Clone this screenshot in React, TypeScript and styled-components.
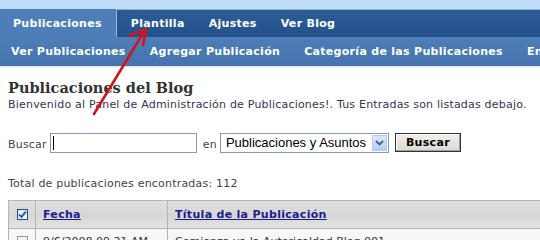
import styled, { createGlobalStyle } from "styled-components";

const GlobalStyle = createGlobalStyle`
  body {
    margin: 0;
    background: #fff;
    font-family: "DejaVu Sans", Verdana, sans-serif;
  }
`;

const mainTabs = ["Publicaciones", "Plantilla", "Ajustes", "Ver Blog"];
const subTabs = ["Ver Publicaciones", "Agregar Publicación", "Categoría de las Publicaciones", "Entradas"];

export default function App() {
  return (
    <Page>
      <GlobalStyle />
      <TopStrip />
      <MainNav>
        {mainTabs.map((t, i) => (
          <MainTab key={t} $active={i === 0}>{t}</MainTab>
        ))}
      </MainNav>
      <SubNav>
        {subTabs.map((t) => (
          <SubTab key={t}>{t}</SubTab>
        ))}
      </SubNav>

      <Content>
        <Title>Publicaciones del Blog</Title>
        <Intro>Bienvenido al Panel de Administración de Publicaciones!. Tus Entradas son listadas debajo.</Intro>

        <SearchRow>
          <Label>Buscar</Label>
          <SearchInput>
            <Caret />
          </SearchInput>
          <Label>en</Label>
          <Select>
            <SelectText>Publicaciones y Asuntos</SelectText>
            <SelectArrow>
              <svg width="9" height="6" viewBox="0 0 9 6">
                <path d="M1 1 L4.5 4.5 L8 1" fill="none" stroke="#4d6185" strokeWidth="1.8" />
              </svg>
            </SelectArrow>
          </Select>
          <Button>Buscar</Button>
        </SearchRow>

        <Total>Total de publicaciones encontradas: 112</Total>
      </Content>

      <Table>
        <HeadRow>
          <CheckCell>
            <Check $checked>
              <svg width="9" height="9" viewBox="0 0 9 9">
                <path d="M1 4.5 L3.5 7 L8 1.5" fill="none" stroke="#2a5fd0" strokeWidth="2" />
              </svg>
            </Check>
          </CheckCell>
          <DateCell><HeadLink>Fecha</HeadLink></DateCell>
          <TitleCell><HeadLink>Títula de la Publicación</HeadLink></TitleCell>
        </HeadRow>
        <BodyRow>
          <CheckCell>
            <Check />
          </CheckCell>
          <DateCell>9/6/2008 09:21 AM</DateCell>
          <TitleCell>Comienza ya la Autoricaldad Blog 001</TitleCell>
        </BodyRow>
      </Table>

      <Arrow width="540" height="240" viewBox="0 0 540 240">
        <path d="M94 114 L145 30" stroke="#d4141b" strokeWidth="2.6" strokeLinecap="round" fill="none" />
        <path d="M129 36 L146 29 L143 45" stroke="#d4141b" strokeWidth="2.6" strokeLinecap="round" strokeLinejoin="round" fill="none" />
      </Arrow>
    </Page>
  );
}

const Page = styled.div`
  position: relative;
  width: 540px;
  height: 240px;
  overflow: hidden;
`;

const TopStrip = styled.div`
  height: 9px;
  background: #c0dcf8;
`;

const MainNav = styled.div`
  display: flex;
  height: 28px;
  background: linear-gradient(#2c5c96, #23518b);
  border-top: 1px solid #8fb0d6;
  box-sizing: border-box;
`;

const MainTab = styled.div<{ $active?: boolean }>`
  display: flex;
  align-items: center;
  padding: ${(p) => (p.$active ? "0 14px 0 13px" : "0 11px 0 13px")};
  margin-top: ${(p) => (p.$active ? "-1px" : "0")};
  margin-right: ${(p) => (p.$active ? "1px" : "0")};
  color: #fff;
  font-size: 11px;
  font-weight: bold;
  letter-spacing: 0.3px;
  white-space: nowrap;
  background: ${(p) => (p.$active ? "#4e7eb9" : "transparent")};
  border-right: ${(p) => (p.$active ? "1px solid #9ab8dc" : "none")};
`;

const SubNav = styled.div`
  display: flex;
  height: 29px;
  background: linear-gradient(#4e7eb9, #4473ae);
  box-shadow: 0 1px 2px rgba(0, 0, 0, 0.15);
`;

const SubTab = styled.div`
  display: flex;
  align-items: center;
  padding: 0 12px;
  color: #fff;
  font-size: 11px;
  font-weight: bold;
  letter-spacing: 0.3px;
  white-space: nowrap;
  &:first-child {
    padding-left: 11px;
  }
`;

const Content = styled.div`
  padding: 12px 8px 0;
`;

const Title = styled.h1`
  margin: 0;
  font-family: "DejaVu Serif", Georgia, serif;
  font-size: 14.5px;
  font-weight: bold;
  color: #333;
  line-height: 20px;
`;

const Intro = styled.p`
  margin: 0;
  font-size: 11px;
  letter-spacing: 0.2px;
  line-height: 14px;
  color: #3b3050;
`;

const SearchRow = styled.div`
  display: flex;
  align-items: center;
  gap: 6px;
  margin-top: 20px;
  height: 21px;
`;

const Label = styled.span`
  font-size: 11px;
  letter-spacing: 0.2px;
  color: #444;
  padding-top: 4px;
`;

const SearchInput = styled.div`
  width: 143px;
  height: 18px;
  border: 1px solid #7f9db9;
  display: flex;
  align-items: center;
  padding-left: 2px;
  margin-left: -3px;
`;

const Caret = styled.span`
  width: 1px;
  height: 14px;
  background: #000;
`;

const Select = styled.div`
  display: flex;
  align-items: center;
  width: 167px;
  height: 18px;
  border: 1px solid #7f9db9;
  margin-left: -3px;
  justify-content: space-between;
`;

const SelectText = styled.span`
  font-family: "Liberation Sans", Arial, sans-serif;
  font-size: 13px;
  color: #000;
  padding-left: 5px;
  white-space: nowrap;
`;

const SelectArrow = styled.span`
  display: flex;
  align-items: center;
  justify-content: center;
  width: 15px;
  height: 16px;
  margin-right: 1px;
  background: linear-gradient(#dde8fb, #b6cdf6);
  border: 1px solid #b5c8ef;
  box-sizing: border-box;
`;

const Button = styled.button`
  height: 19px;
  width: 66px;
  padding: 0;
  font-family: "DejaVu Sans", Verdana, sans-serif;
  font-size: 11px;
  font-weight: bold;
  letter-spacing: 0.3px;
  color: #000;
  background: linear-gradient(#f0efea, #dcdad2);
  border: 1px solid #333;
  box-shadow: inset -1px -1px 0 #a0a0a0, inset 1px 1px 0 #fff;
`;

const Total = styled.div`
  margin-top: 24px;
  font-size: 11px;
  letter-spacing: 0.2px;
  color: #444;
`;

const Table = styled.div`
  margin: 10px 0 0 8px;
  border-top: 1px solid #b4b4b4;
  border-left: 1px solid #b4b4b4;
`;

const HeadRow = styled.div`
  display: grid;
  grid-template-columns: 27px 132px 1fr;
  height: 27px;
  background: linear-gradient(#e0e0e0 0%, #d6d6d6 55%, #e4e4e4 100%);
  border-bottom: 1px solid #b4b4b4;
`;

const BodyRow = styled.div`
  display: grid;
  grid-template-columns: 27px 132px 1fr;
  height: 24px;
  background: #f7f7f7;
  font-size: 11px;
  color: #333;
`;

const CheckCell = styled.div`
  display: flex;
  align-items: center;
  justify-content: center;
  border-right: 1px solid #b4b4b4;
`;

const DateCell = styled.div`
  display: flex;
  align-items: center;
  padding-left: 7px;
  border-right: 1px solid #b4b4b4;
  white-space: nowrap;
`;

const TitleCell = styled.div`
  display: flex;
  align-items: center;
  padding-left: 7px;
  white-space: nowrap;
`;

const HeadLink = styled.a`
  font-size: 11px;
  font-weight: bold;
  letter-spacing: 0.3px;
  color: #1c1c8c;
  text-decoration: underline;
`;

const Check = styled.span<{ $checked?: boolean }>`
  display: flex;
  align-items: center;
  justify-content: center;
  width: 11px;
  height: 11px;
  box-sizing: border-box;
  border: 1px solid ${(p) => (p.$checked ? "#1c4f7c" : "#8a9aaa")};
  background: ${(p) => (p.$checked ? "linear-gradient(#e8e8e2, #fdfdfb)" : "#f4f4f4")};
`;

const Arrow = styled.svg`
  position: absolute;
  left: 0;
  top: 0;
  pointer-events: none;
`;
